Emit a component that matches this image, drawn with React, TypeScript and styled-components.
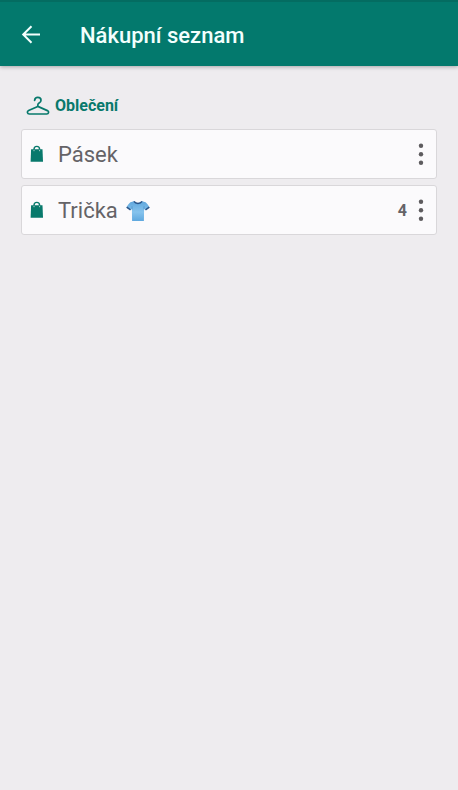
import React from 'react';
import styled, { createGlobalStyle } from 'styled-components';

const GlobalStyle = createGlobalStyle`
  * { box-sizing: border-box; }
  body {
    margin: 0;
    background: #eeecef;
    font-family: Roboto, "Noto Sans", sans-serif;
  }
`;

const Page = styled.div`
  min-height: 100vh;
  background: #eeecef;
`;

const AppBar = styled.header`
  display: flex;
  align-items: center;
  height: 66px;
  padding: 2px 12px 0;
  gap: 30px;
  background: #03796d;
  border-top: 2px solid #046c61;
  box-shadow: 0 1px 4px rgba(0, 0, 0, 0.3);
  color: #f3fffd;
`;

const IconButton = styled.button<{ $width: number }>`
  display: flex;
  align-items: center;
  justify-content: center;
  flex: none;
  width: ${({ $width }) => $width}px;
  height: 38px;
  padding: 0;
  border: 0;
  background: none;
  color: inherit;
  cursor: pointer;
`;

const Title = styled.h1`
  margin: 0;
  padding-top: 2px;
  font-size: 22px;
  font-weight: 500;
  line-height: 28px;
`;

const Content = styled.main`
  padding: 28px 21px;
`;

const CategoryHeading = styled.h2`
  display: flex;
  align-items: center;
  gap: 5px;
  margin: 0 0 11px;
  padding-left: 5px;
  color: #08796c;
  font-size: 16px;
  font-weight: 700;
  line-height: 24px;
`;

const ItemList = styled.ul`
  display: flex;
  flex-direction: column;
  gap: 6px;
  margin: 0;
  padding: 0;
  list-style: none;
`;

const ItemCard = styled.li`
  display: flex;
  align-items: center;
  height: 50px;
  padding: 0 4px 0 8px;
  border: 1px solid #d9d7da;
  border-radius: 3px;
  background: #fbfafc;
  color: #656367;
`;

const ItemName = styled.span`
  display: flex;
  flex: 1;
  align-items: center;
  gap: 8px;
  margin-left: 14px;
  padding-top: 2px;
  font-size: 22px;
  line-height: 28px;
`;

const Quantity = styled.span`
  margin-right: 3px;
  padding-top: 2px;
  font-size: 16px;
  font-weight: 700;
  line-height: 24px;
`;

const BackIcon = () => (
  <svg width="20" height="20" viewBox="0 0 20 20" fill="none" stroke="currentColor" strokeWidth="2" aria-hidden="true">
    <path d="M19 9.5H2.5M10.5 1.2 2.2 9.5l8.3 8.3" />
  </svg>
);

const HangerIcon = () => (
  <svg width="24" height="20" viewBox="0 0 24 20" fill="none" stroke="#08796c" strokeWidth="1.7" strokeLinecap="round" strokeLinejoin="round" aria-hidden="true">
    <path d="M8.6 4.3C8.8 2.4 10.1 1.3 11.8 1.3s3.2 1.2 3.2 2.9c0 1.5-.9 2.3-1.9 2.9-.8.5-1.3.9-1.3 1.8v1.5M11.8 10.4l-9.2 4.2c-1.9.9-1.4 3.4.7 3.4h17.4c2.1 0 2.6-2.5.7-3.4z" />
  </svg>
);

const BagIcon = () => (
  <svg width="14" height="18" viewBox="0 0 14 18" aria-hidden="true">
    <path d="M4 7V4.2a2.8 2.8 0 0 1 5.6 0V7" fill="none" stroke="#08796c" strokeWidth="1.4" />
    <path d="M1.1 4.3h11.4l.5 12.5H.6z" fill="#08796c" />
    <path d="M4 4.8v1.4M9.6 4.8v1.4" stroke="#a8d2cc" strokeWidth="1" />
  </svg>
);

const MoreIcon = () => (
  <svg width="6" height="24" viewBox="0 0 6 24" fill="#5d5b5e" aria-hidden="true">
    <circle cx="3" cy="3.7" r="2.2" />
    <circle cx="3" cy="12.2" r="2.2" />
    <circle cx="3" cy="20.7" r="2.2" />
  </svg>
);

const ShirtIcon = () => (
  <svg width="24" height="22" viewBox="0 0 24 22" role="img" aria-label="tričko">
    <defs>
      <linearGradient id="shirt" x1="0" y1="0" x2="0" y2="1">
        <stop offset="0" stopColor="#5fa6dc" />
        <stop offset="0.55" stopColor="#86c3ed" />
        <stop offset="1" stopColor="#5fa8df" />
      </linearGradient>
    </defs>
    <path d="M8 1.2 4.4 2.2C2.7 3.7 1.2 5.6.4 7.5l4 2.8 1.5-1.4.2 12h11.8l.2-12 1.5 1.4 4-2.8c-.8-1.9-2.3-3.8-4-5.3L16 1.2c-1.7 2.3-6.3 2.3-8 0z" fill="url(#shirt)" />
    <path d="M.7 7.2l3.8 2.6M23.3 7.2l-3.8 2.6M8 1.3c1.7 2.8 6.3 2.8 8 0" fill="none" stroke="#2b5488" strokeWidth="1.5" />
    <path d="M6 6.3v3M18 6.3v3" stroke="#4b8cc3" strokeWidth="0.7" />
  </svg>
);

type Item = { name: string; shirt?: boolean; quantity?: number };

const items: Item[] = [
  { name: 'Pásek' },
  { name: 'Trička', shirt: true, quantity: 4 },
];

export default function App() {
  return (
    <Page>
      <GlobalStyle />
      <AppBar>
        <IconButton type="button" $width={38} aria-label="Zpět">
          <BackIcon />
        </IconButton>
        <Title>Nákupní seznam</Title>
      </AppBar>
      <Content>
        <CategoryHeading>
          <HangerIcon />
          Oblečení
        </CategoryHeading>
        <ItemList>
          {items.map((item) => (
            <ItemCard key={item.name}>
              <BagIcon />
              <ItemName>
                {item.name}
                {item.shirt && <ShirtIcon />}
              </ItemName>
              {item.quantity && <Quantity>{item.quantity}</Quantity>}
              <IconButton type="button" $width={22} aria-label={`Možnosti: ${item.name}`}>
                <MoreIcon />
              </IconButton>
            </ItemCard>
          ))}
        </ItemList>
      </Content>
    </Page>
  );
}
